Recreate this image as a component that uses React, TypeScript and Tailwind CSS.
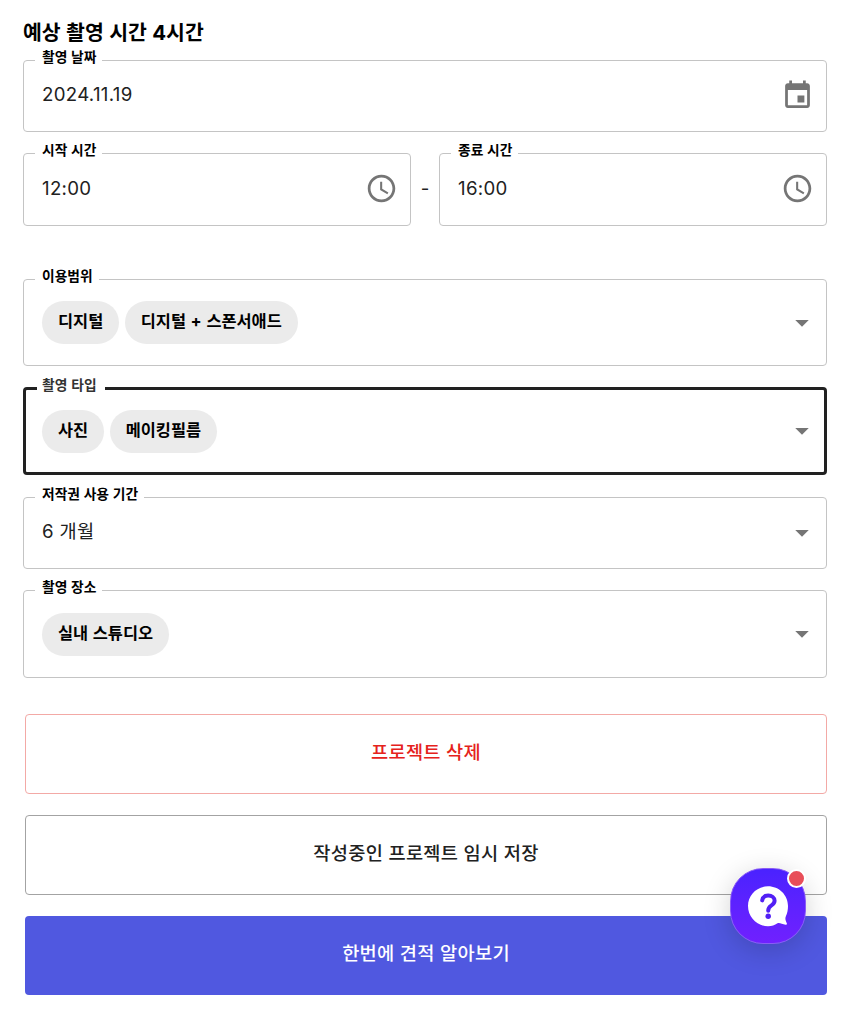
import React from 'react';

interface FieldProps {
  label: string;
  className: string;
  focused?: boolean;
  icon?: React.ReactNode;
  children: React.ReactNode;
}

function Field({ label, className, focused = false, icon, children }: FieldProps) {
  return (
    <div
      className={`relative flex items-center justify-between rounded-[4px] ${
        focused ? 'border-[3px] border-[#212121] pl-[16px] pr-[8px]' : 'border border-[#c4c4c4] pl-[18px] pr-[10px]'
      } ${className}`}
    >
      <label
        className={`absolute bg-white whitespace-nowrap text-[13.75px] leading-[18px] [word-spacing:0.5px] ${
          focused
            ? '-top-[14px] left-[11px] pl-[5px] pr-[8px] font-semibold text-[#333333]'
            : '-top-[13px] left-[11px] pl-[7px] pr-[6px] font-bold text-black'
        }`}
      >
        {label}
      </label>
      {children}
      {icon}
    </div>
  );
}

function Value({ children }: { children: React.ReactNode }) {
  return (
    <span className="relative -top-px text-[18.67px] leading-7 tracking-[0.3px] text-[#212121]">{children}</span>
  );
}

function Chips({ items }: { items: string[] }) {
  return (
    <div className="flex gap-[5.5px]">
      {items.map((item) => (
        <span
          key={item}
          className="flex h-[43px] items-center rounded-full bg-[#ebebeb] px-4 pb-[2px] text-[16.4px] font-bold text-black [word-spacing:0.75px]"
        >
          {item}
        </span>
      ))}
    </div>
  );
}

function EventIcon() {
  return (
    <svg className="-mt-px mr-[2px] size-[33px] shrink-0 fill-[#757575]" viewBox="0 0 24 24">
      <path d="M17 12h-5v5h5v-5zM16 1v2H8V1H6v2H5c-1.11 0-1.99.9-1.99 2L3 19c0 1.1.89 2 2 2h14c1.1 0 2-.9 2-2V5c0-1.1-.9-2-2-2h-1V1h-2zm3 18H5V8h14v11z" />
    </svg>
  );
}

function ClockIcon() {
  return (
    <svg className="-mt-[2px] mr-[2px] size-[33px] shrink-0 fill-[#757575]" viewBox="0 0 24 24">
      <path d="M11.99 2C6.47 2 2 6.48 2 12s4.47 10 9.99 10C17.52 22 22 17.52 22 12S17.52 2 11.99 2zM12 20c-4.42 0-8-3.58-8-8s3.58-8 8-8 8 3.58 8 8-3.58 8-8 8z" />
      <path d="M12.5 7H11v6l5.25 3.15.75-1.23-4.5-2.67z" />
    </svg>
  );
}

function ArrowIcon() {
  return (
    <svg className="size-[28px] shrink-0 fill-[#757575]" viewBox="0 0 24 24">
      <path d="M6.2 9.400l5.800 5.800 5.800-5.800z" />
    </svg>
  );
}

function ChatButton() {
  return (
    <button className="absolute left-[730px] top-[868px] size-[76px] rounded-[33px] border border-[#8a5cf5] bg-linear-to-b from-[#4a22ff] to-[#7020ff] shadow-[0_6px_28px_rgba(0,0,0,0.18)]">
      <svg className="absolute left-[16px] top-[16px] size-[42px]" viewBox="0 0 42 42">
        <path
          d="M21 1.300C10 1.300 1 10 1 21s9 20.300 20 20.300c4 0 6.500-1.300 9.500-3 2-.9 4.500.9 8.200 1.400.9 0 1.500-.7 1.100-1.500-1-2.300-2-4.200-1-6.700C40.300 28.500 41 24.500 41 21 41 10 32 1.300 21 1.300z"
          fill="#fff"
        />
        <path
          d="M15.200 15.400c.6-3.200 3-4.800 6-4.800 3.600 0 6.400 2 6.400 5.200 0 2.500-1.600 3.700-3.400 4.800-2 1.200-3 2.200-3 5.200"
          fill="none"
          stroke="#5220f5"
          strokeWidth="4"
          strokeLinecap="round"
        />
        <circle cx="21.200" cy="31.300" r="2.700" fill="#5220f5" />
      </svg>
      <span className="absolute right-[-1px] top-0 size-[19px] rounded-full border-[2.500px] border-white bg-[#e84e58]" />
    </button>
  );
}

export default function App() {
  return (
    <div className="relative h-[1024px] w-[852px] overflow-hidden bg-white pl-[23px] pr-[25px] pt-[18px] font-['Inter','Noto_Sans_CJK_KR',sans-serif]">
      <h1 className="h-[42px] text-[20.500px] font-bold leading-[30px] text-black [word-spacing:0.5px]">
        예상 촬영 시간 4시간
      </h1>

      <Field label="촬영 날짜" className="h-[72px]" icon={<EventIcon />}>
        <Value>2024.11.19</Value>
      </Field>
      <div className="mt-[21px] flex items-center">
        <Field label="시작 시간" className="h-[73px] flex-1" icon={<ClockIcon />}>
          <Value>12:00</Value>
        </Field>
        <span className="w-[28px] pb-[2px] text-center text-[18.67px] text-[#212121]">-</span>
        <Field label="종료 시간" className="h-[73px] flex-1" icon={<ClockIcon />}>
          <Value>16:00</Value>
        </Field>
      </div>

      <Field label="이용범위" className="mt-[53px] h-[87px]" icon={<ArrowIcon />}>
        <Chips items={['디지털', '디지털 + 스폰서애드']} />
      </Field>
      <Field label="촬영 타입" className="mt-[21px] h-[88px]" focused icon={<ArrowIcon />}>
        <Chips items={['사진', '메이킹필름']} />
      </Field>
      <Field label="저작권 사용 기간" className="mt-[22px] h-[72px]" icon={<ArrowIcon />}>
        <Value>6 개월</Value>
      </Field>
      <Field label="촬영 장소" className="mt-[21px] h-[88px]" icon={<ArrowIcon />}>
        <Chips items={['실내 스튜디오']} />
      </Field>

      <div className="ml-[2px] mt-[36px] flex flex-col gap-[21px] text-[18.67px] font-medium tracking-[0.3px]">
        <button className="h-[80px] rounded-[4px] border border-[#f3a9a6] pb-[2px] text-[#e5221c]">프로젝트 삭제</button>
        <button className="h-[80px] rounded-[4px] border border-[#a3a3a3] pb-[2px] text-[#212121]">
          작성중인 프로젝트 임시 저장
        </button>
        <button className="h-[79px] rounded-[4px] bg-[#5058e0] pb-[3px] text-white">한번에 견적 알아보기</button>
      </div>

      <ChatButton />
    </div>
  );
}
